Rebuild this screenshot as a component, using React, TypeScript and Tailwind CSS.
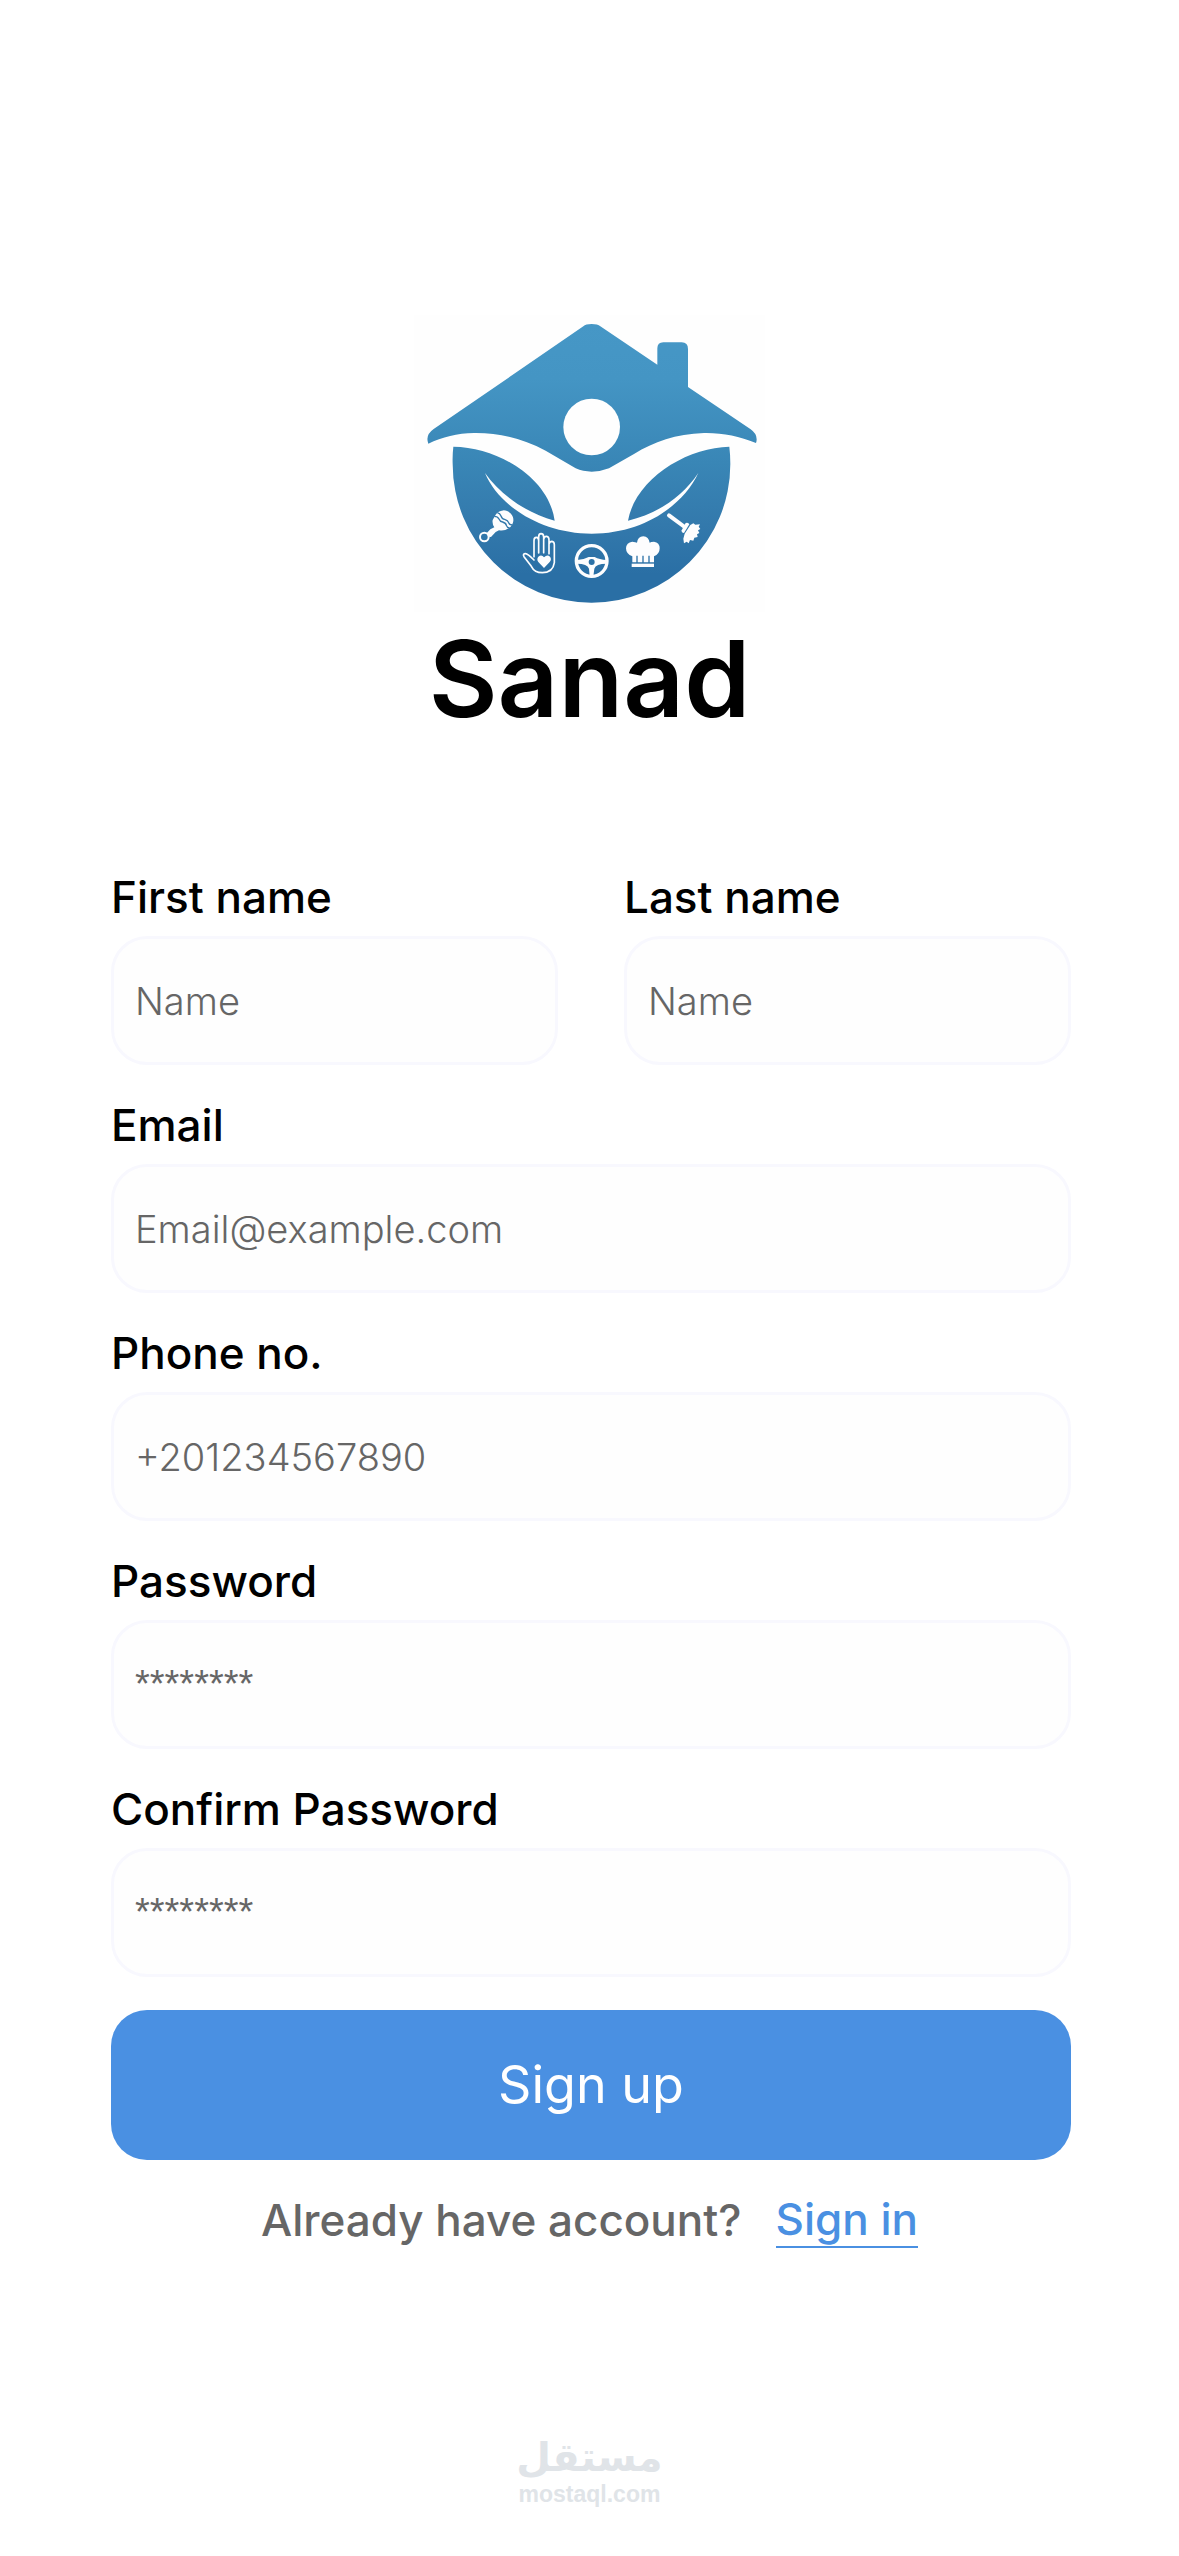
import React from "react";

function SanadLogo() {
  return (
    <svg viewBox="45 45 1053 891" className="h-[297px] w-[351px]" role="img" aria-label="Sanad logo">
      <defs>
        <linearGradient id="house" gradientUnits="userSpaceOnUse" x1="578" y1="70" x2="578" y2="908">
          <stop offset="0" stopColor="#4697c6" />
          <stop offset="0.2" stopColor="#4495c4" />
          <stop offset="0.5" stopColor="#3986b6" />
          <stop offset="0.72" stopColor="#3379ac" />
          <stop offset="0.9" stopColor="#2a6fa5" />
          <stop offset="1" stopColor="#2a6fa5" />
        </linearGradient>
      </defs>
      <rect x="45" y="45" width="1053" height="891" fill="#fefefe" />
      <path
        fill="url(#house)"
        d="M88 431Q78 405 104 387L553 79Q560 72 578 72Q596 72 604 79L775 194V145Q775 127 793 127H848Q867 127 867 147V261L1055 388Q1079 405 1071 429C1020 408 970 398 915 399C830 402 765 425 705 462L630 505Q605 515 578 515Q552 515 530 505L440 452C370 415 300 398 225 399C175 400 130 411 88 431Z"
      />
      <circle cx="578" cy="381" r="85" fill="#fefefe" />
      <path
        fill="url(#house)"
        d="M163 440C300 442 450 535 467 662C380 638 305 585 258 519C300 620 430 701 578 701C730 701 850 620 898 519C850 590 775 642 687 662C710 535 865 442 991 440Q994 465 994 492A416 416 0 0 1 578 908A416 416 0 0 1 161 492Q160 465 163 440Z"
      />
      <g transform="translate(60 420)" fill="#fdfdfe">
        <circle cx="196" cy="291" r="13" fill="none" stroke="#fdfdfe" strokeWidth="6" />
        <path d="M203 280L214 268L226 262Q219 252 221 240L230 224A29 29 0 1 1 269 265Q256 274 240 271L230 276L216 291L208 290Z" />
        <path
          d="M226 229Q236 229 240 237Q243 245 251 246Q261 249 262 256Q264 263 272 264M235 218Q243 220 246 228Q249 237 257 238Q267 241 269 248Q271 254 279 255"
          fill="none"
          stroke="#3278ab"
          strokeWidth="4"
        />
        <g fill="none" stroke="#fdfdfe" strokeWidth="5" strokeLinecap="round" strokeLinejoin="round">
          <path d="M345 350V302Q345 292 352 292Q359 292 359 302V339M359 302V291Q359 281 366 281Q374 281 374 291V338M374 298Q376 288 383 289Q390 290 390 300V341M390 312Q392 304 399 304Q406 305 406 314V368Q402 398 370 398Q346 398 337 379L315 350Q310 341 320 341Q326 341 345 360" />
        </g>
        <path d="M375 384L358 366Q352 357 358 350Q368 342 375 352Q385 342 393 350Q399 358 392 366Z" />
        <circle cx="518" cy="363" r="46" fill="none" stroke="#fdfdfe" strokeWidth="10" />
        <path
          fillRule="evenodd"
          d="M474 360Q495 359 509 351H527Q541 359 563 360V371Q530 371 526 386L523 409H512L510 386Q505 371 474 371ZM518 357A9 9 0 1 0 518 375A9 9 0 1 0 518 357Z"
        />
        <path d="M640 367V349Q621 342 621 325Q622 307 640 305Q650 306 654 308Q656 290 673 289Q689 290 692 308Q696 305 705 305Q722 307 722 325Q722 342 705 349V367H692V347H688V367H674V347H670V367H656V347H652V367Z" />
        <path d="M638 371H705V381H638Z" />
        <path d="M750 226L797 261" stroke="#fdfdfe" strokeWidth="12" strokeLinecap="round" />
        <path d="M800 249Q808 246 811 253L795 279Q787 279 788 271Z" />
        <path d="M814 255L823 250L829 254L843 253L839 260L844 267L837 271L841 279L834 283L836 291L826 293L823 302L813 300L809 310L803 305L795 310L793 296L797 281Z" />
      </g>
    </svg>
  );
}

type FieldProps = {
  id: string;
  label: string;
  placeholder: string;
  type?: string;
};

function Field({ id, label, placeholder, type = "text" }: FieldProps) {
  return (
    <div className="flex min-w-0 flex-1 flex-col gap-3">
      <label htmlFor={id} className="text-[44px] leading-[54px] font-medium text-black">
        {label}
      </label>
      <input
        id={id}
        type={type}
        placeholder={placeholder}
        className={
          type === "password"
            ? "h-[129px] w-full rounded-[36px] border-3 border-[#f8f8fe] bg-[#fefefe] px-[21px] font-['Liberation_Sans',sans-serif] text-[38px] text-black outline-none placeholder:text-[#666666] placeholder:opacity-100"
            : "h-[129px] w-full rounded-[36px] border-3 border-[#f8f8fe] bg-[#fefefe] px-[21px] text-[38px] font-light text-black outline-none placeholder:text-[#666666] placeholder:opacity-100"
        }
      />
    </div>
  );
}

export default function App() {
  return (
    <main className="flex min-h-screen flex-col items-center bg-white pt-[315px] font-['Inter',sans-serif]">
      <SanadLogo />
      <h1 className="text-[106px] leading-[134px] font-semibold text-black">Sanad</h1>
      <form className="mt-[124px] flex w-full flex-col gap-[33px] pr-[108px] pl-[111px]" onSubmit={(e) => e.preventDefault()}>
        <div className="flex gap-[66px]">
          <Field id="first-name" label="First name" placeholder="Name" />
          <Field id="last-name" label="Last name" placeholder="Name" />
        </div>
        <Field id="email" label="Email" placeholder="Email@example.com" type="email" />
        <Field id="phone" label="Phone no." placeholder="+201234567890" type="tel" />
        <Field id="password" label="Password" placeholder="********" type="password" />
        <Field id="confirm-password" label="Confirm Password" placeholder="********" type="password" />
        <button type="submit" className="h-[150px] rounded-[36px] bg-[#4a90e2] text-[52px] text-white">
          Sign up
        </button>
      </form>
      <p className="mt-8 flex items-center gap-[34px] text-[44px] leading-[54px] font-medium text-[#666666]">
        <span>Already have account?</span>
        <a href="#sign-in" className="border-b-2 border-[#4a90e2] text-[#4a90e2]">
          Sign in
        </a>
      </p>
      <footer className="mt-auto flex flex-col items-center pb-[50px] font-bold text-[#e0e4e8]">
        <span dir="rtl" lang="ar" className="font-['DejaVu_Sans',sans-serif] text-[40px] leading-[50px]">
          مستقل
        </span>
        <span className="font-['Liberation_Sans',sans-serif] text-[23px] leading-6">mostaql.com</span>
      </footer>
    </main>
  );
}
